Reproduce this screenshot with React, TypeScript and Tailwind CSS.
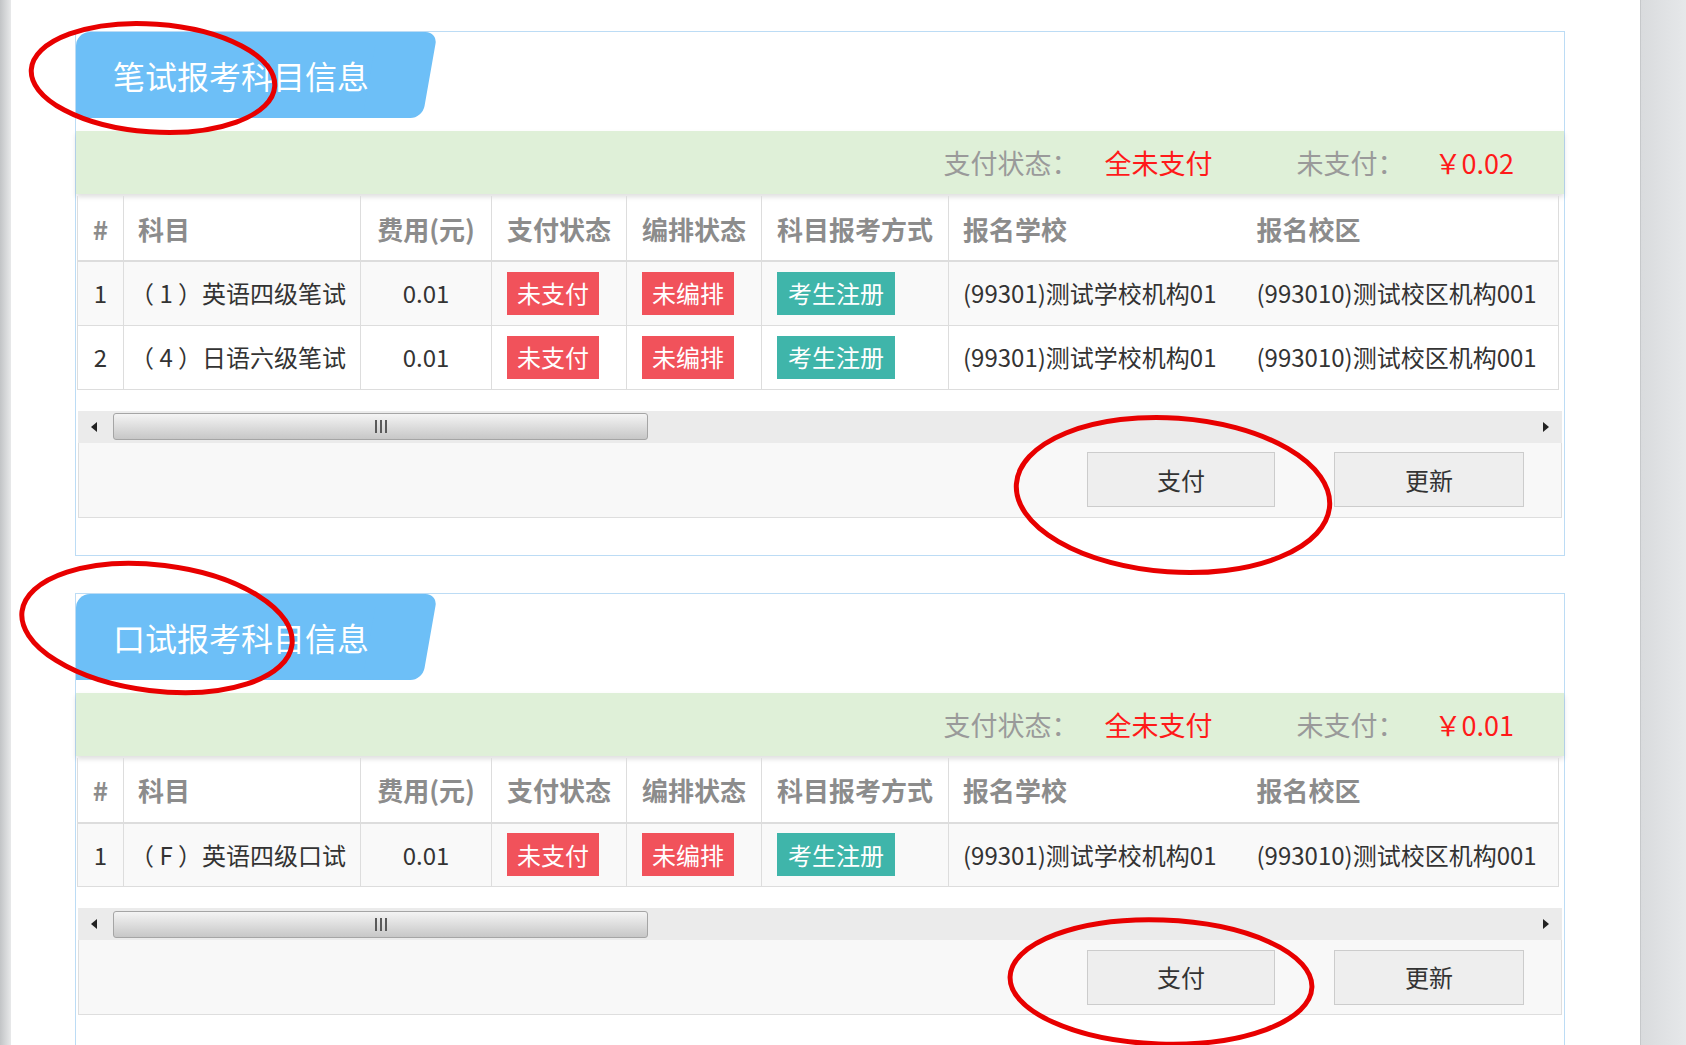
import type React from "react";

type Row = {
  no: number;
  subject: string;
  fee: string;
};

const FONT = "font-['Noto_Sans_CJK_SC','Microsoft_YaHei',sans-serif]";

// 小标签
const Badge: React.FC<{ tone: "red" | "teal"; children: React.ReactNode }> = ({
  tone,
  children,
}) => (
  <span
    className={
      tone === "red"
        ? "inline-flex h-[43px] items-center px-[10px] text-[24px] leading-none text-white bg-[#f1525b]"
        : "inline-flex h-[43px] items-center px-[11px] text-[24px] leading-none text-white bg-[#3fb5aa]"
    }
  >
    {children}
  </span>
);

const Tab: React.FC<{ title: string }> = ({ title }) => (
  <div className="relative h-[86px] w-[361px]">
    <div className="absolute left-0 top-0 h-full w-[324px] rounded-tl-[14px] bg-[#6dbff7]" />
    <div className="absolute left-[294px] top-0 h-full w-[60px] -skew-x-[10deg] rounded-[12px] bg-[#6dbff7]" />
    <div className="relative flex h-full items-center pl-[37px] text-[32px] leading-none text-white">
      {title}
    </div>
  </div>
);

const ScrollBar: React.FC = () => (
  <div className="mx-[2px] flex h-[32px] items-center bg-[#ebebeb]">
    <div className="ml-[13px] h-0 w-0 border-y-[5px] border-r-[6px] border-y-transparent border-r-[#222]" />
    <div className="ml-[16px] flex h-[27px] w-[535px] items-center justify-center rounded-[3px] border border-[#a5a5a5] bg-gradient-to-b from-[#f4f4f4] to-[#c7c7c7]">
      <div className="flex gap-[3px]">
        <span className="h-[13px] w-[2px] bg-[#5a5a5a]" />
        <span className="h-[13px] w-[2px] bg-[#5a5a5a]" />
        <span className="h-[13px] w-[2px] bg-[#5a5a5a]" />
      </div>
    </div>
    <div className="flex-1" />
    <div className="mr-[13px] h-0 w-0 border-y-[5px] border-l-[6px] border-y-transparent border-l-[#222]" />
  </div>
);

const SubjectCard: React.FC<{ title: string; total: string; rows: Row[] }> = ({
  title,
  total,
  rows,
}) => (
  <div className="w-[1490px] border border-[#bcdcf5] bg-white">
    <Tab title={title} />

    {/* 支付汇总 */}
    <div className="mt-[13px] flex h-[63px] items-center justify-end bg-[#dff0d8] pr-[50px] text-[27px] leading-none shadow-[0_3px_5px_rgba(0,0,0,0.13)]">
      <span className="text-[#9a9a9a]">支付状态：</span>
      <span className="ml-[26px] text-[#ff1a1a]">全未支付</span>
      <span className="ml-[84px] text-[#9a9a9a]">未支付：</span>
      <span className="ml-[30px] text-[#ff1a1a]">￥0.0{total}</span>
    </div>

    <div className="ml-[1px] mt-[2px]">
      <table className="w-[1481px] table-fixed border-collapse border-x border-[#dddddd] text-[24px] text-[#333]">
        <colgroup>
          <col className="w-[46px]" />
          <col className="w-[237px]" />
          <col className="w-[131px]" />
          <col className="w-[135px]" />
          <col className="w-[135px]" />
          <col className="w-[187px]" />
          <col className="w-[291px]" />
          <col className="w-[319px]" />
        </colgroup>
        <thead>
          <tr className="h-[65px] text-[26px] font-bold text-[#8c8c8c]">
            <th className="border-b-2 border-[#dddddd] text-center font-bold">#</th>
            <th className="border-b-2 border-l border-[#dddddd] pl-[14px] text-left font-bold">科目</th>
            <th className="border-b-2 border-l border-[#dddddd] text-center font-bold">费用(元)</th>
            <th className="border-b-2 border-l border-[#dddddd] pl-[15px] text-left font-bold">支付状态</th>
            <th className="border-b-2 border-l border-[#dddddd] pl-[15px] text-left font-bold">编排状态</th>
            <th className="border-b-2 border-l border-[#dddddd] pl-[15px] text-left font-bold">科目报考方式</th>
            <th className="border-b-2 border-l border-[#dddddd] pl-[14px] text-left font-bold">报名学校</th>
            <th className="border-b-2 border-[#dddddd] pl-[17px] text-left font-bold">报名校区</th>
          </tr>
        </thead>
        <tbody>
          {rows.map((r, i) => (
            <tr
              key={r.no}
              className={
                i % 2 === 0
                  ? "h-[64px] border-b border-[#dddddd] bg-[#f9f9f9]"
                  : "h-[64px] border-b border-[#dddddd] bg-white"
              }
            >
              <td className="text-center">{r.no}</td>
              <td className="border-l border-[#dddddd] pl-[6px] whitespace-nowrap">{r.subject}</td>
              <td className="border-l border-[#dddddd] text-center">{r.fee}</td>
              <td className="border-l border-[#dddddd] pl-[15px]">
                <Badge tone="red">未支付</Badge>
              </td>
              <td className="border-l border-[#dddddd] pl-[15px]">
                <Badge tone="red">未编排</Badge>
              </td>
              <td className="border-l border-[#dddddd] pl-[15px]">
                <Badge tone="teal">考生注册</Badge>
              </td>
              <td className="border-l border-[#dddddd] pl-[14px] whitespace-nowrap">
                (99301)测试学校机构01
              </td>
              <td className="pl-[17px] whitespace-nowrap">(993010)测试校区机构001</td>
            </tr>
          ))}
        </tbody>
      </table>
    </div>

    <div className="mt-[21px]">
      <ScrollBar />
    </div>

    {/* 操作按钮 */}
    <div className="mx-[2px] flex h-[75px] items-center justify-end gap-[59px] border-x border-b border-[#dedede] bg-[#f8f8f8] pr-[37px]">
      <button className="h-[55px] w-[188px] border border-[#cccccc] bg-[#eeeeee] text-[24px] text-[#333]">
        支付
      </button>
      <button className="h-[55px] w-[190px] border border-[#cccccc] bg-[#eeeeee] text-[24px] text-[#333]">
        更新
      </button>
    </div>
    <div className="h-[37px]" />
  </div>
);

const writtenRows: Row[] = [
  { no: 1, subject: "（ 1 ）英语四级笔试", fee: "0.01" },
  { no: 2, subject: "（ 4 ）日语六级笔试", fee: "0.01" },
];

const oralRows: Row[] = [{ no: 1, subject: "（ F ）英语四级口试", fee: "0.01" }];

export default function App() {
  return (
    <div className={`relative flex h-[1045px] w-[1686px] overflow-hidden bg-white ${FONT}`}>
      <div className="w-[11px] bg-gradient-to-r from-[#c2c4c6] to-[#e8e9ea]" />

      <div className="flex-1 pl-[64px] pt-[31px]">
        <SubjectCard title="笔试报考科目信息" total="2" rows={writtenRows} />
        <div className="h-[37px]" />
        <SubjectCard title="口试报考科目信息" total="1" rows={oralRows} />
      </div>

      <div className="w-[46px] border-l border-[#c6c8ca] bg-gradient-to-r from-[#d9dbdd] to-[#e6e8ea]" />

      {/* 红圈标注 */}
      <svg
        className="pointer-events-none absolute left-0 top-0"
        width="1686"
        height="1045"
        viewBox="0 0 1686 1045"
      >
        <g fill="none" stroke="#e80000" strokeWidth="5">
          <ellipse cx="153" cy="78" rx="122" ry="54" transform="rotate(4 153 78)" />
          <ellipse cx="157" cy="628" rx="136" ry="63" transform="rotate(7 157 628)" />
          <ellipse cx="1173" cy="495" rx="157" ry="77" transform="rotate(4 1173 495)" />
          <ellipse cx="1161" cy="982" rx="151" ry="62" transform="rotate(2 1161 982)" />
        </g>
      </svg>
    </div>
  );
}
